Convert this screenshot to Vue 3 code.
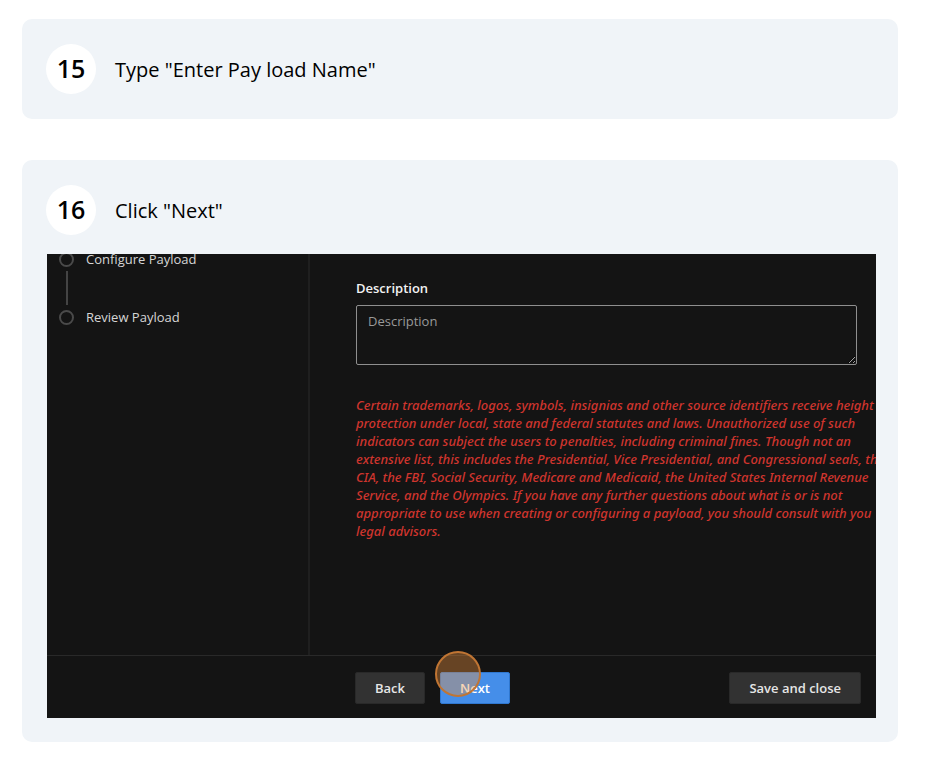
<script setup>
const wizardSteps = ['Configure Payload', 'Review Payload']
const legalLines = [
  'Certain trademarks, logos, symbols, insignias and other source identifiers receive height',
  'protection under local, state and federal statutes and laws. Unauthorized use of such',
  'indicators can subject the users to penalties, including criminal fines. Though not an',
  'extensive list, this includes the Presidential, Vice Presidential, and Congressional seals, th',
  'CIA, the FBI, Social Security, Medicare and Medicaid, the United States Internal Revenue',
  'Service, and the Olympics. If you have any further questions about what is or is not',
  'appropriate to use when creating or configuring a payload, you should consult with you',
  'legal advisors.',
]
</script>

<template>
  <main class="guide">
    <section class="card">
      <header class="card-head">
        <span class="number">15</span>
        <h2 class="title">Type "Enter Pay load Name"</h2>
      </header>
    </section>

    <section class="card">
      <header class="card-head">
        <span class="number">16</span>
        <h2 class="title">Click "Next"</h2>
      </header>

      <div class="shot">
        <div class="shot-body">
          <ol class="steps">
            <li v-for="step in wizardSteps" :key="step" class="step">
              <span class="marker"></span>
              <span class="step-label">{{ step }}</span>
            </li>
          </ol>
          <form class="form" @submit.prevent>
            <label class="label" for="description">Description</label>
            <textarea id="description" class="description" placeholder="Description"></textarea>
            <p class="legal">
              <span v-for="line in legalLines" :key="line" class="legal-line">{{ line }}</span>
            </p>
          </form>
        </div>
        <footer class="actions">
          <button type="button" class="button">Back</button>
          <span class="target">
            <button type="button" class="button primary">Next</button>
            <span class="click"></span>
          </span>
          <button type="button" class="button save">Save and close</button>
        </footer>
      </div>
    </section>
  </main>
</template>

<style>
body {
  background: #fff;
}
</style>

<style scoped>
.guide {
  display: flex;
  flex-direction: column;
  gap: 41px;
  padding: 19px 32px 38px 22px;
  font-family: "Open Sans", "Noto Sans", sans-serif;
  color: #000;
}
.card {
  padding: 25px 22px 25px 24px;
  border-radius: 10px;
  background: #f0f4f8;
}
.card:last-child {
  padding-bottom: 24px;
}
.card-head {
  display: flex;
  align-items: center;
  gap: 19px;
}
.number {
  width: 50px;
  height: 50px;
  border-radius: 50%;
  background: #fff;
  font-size: 25px;
  font-weight: 600;
  line-height: 48px;
  text-align: center;
}
.title {
  margin: 0;
  padding-top: 2px;
  font-size: 20px;
  font-weight: 400;
  line-height: 28px;
}
.shot {
  margin: 19px 0 0 1px;
  overflow: hidden;
  background: #141414;
  color: #d6d6d6;
  font-size: 13px;
  line-height: 18px;
}
.shot-body {
  display: grid;
  grid-template-columns: 263px minmax(0, 1fr);
  height: 401px;
}
.steps {
  margin: 0;
  padding: 0 0 0 12px;
  overflow: hidden;
  border-right: 2px solid #1f1f1f;
  list-style: none;
}
.step {
  position: relative;
  display: flex;
  align-items: center;
  gap: 12px;
  height: 18px;
  margin-bottom: 40px;
}
.step:first-child {
  margin-top: -4px;
}
.step:not(:last-child)::after {
  content: "";
  position: absolute;
  top: 21px;
  left: 7px;
  width: 2px;
  height: 34px;
  background: #444;
}
.marker {
  box-sizing: border-box;
  width: 15px;
  height: 15px;
  border: 2px solid #4a4a4a;
  border-radius: 50%;
}
.form {
  display: flex;
  flex-direction: column;
  padding: 25px 19px 0 46px;
}
.label {
  color: #f2f2f2;
  font-weight: 600;
}
.description {
  box-sizing: border-box;
  height: 60px;
  margin-top: 8px;
  padding: 6px 11px;
  border: 1px solid #8f8f8f;
  border-radius: 2px;
  outline: 0;
  background: #141414;
  color: #d6d6d6;
  color-scheme: dark;
  font: inherit;
  resize: vertical;
}
.description::placeholder {
  color: #999;
  opacity: 1;
}
.legal {
  margin: 31px 0 0;
  color: #cf352e;
  font-family: "Noto Sans", sans-serif;
  font-style: italic;
  font-weight: 500;
}
.legal-line {
  display: block;
  white-space: nowrap;
}
.actions {
  display: flex;
  align-items: center;
  gap: 15px;
  padding: 16px 15px 14px 308px;
  border-top: 1px solid #292929;
}
.button {
  height: 32px;
  padding: 0 19px;
  border: 1px solid #292929;
  border-radius: 2px;
  background: #323232;
  color: #e6e6e6;
  font: inherit;
  font-weight: 600;
}
.primary {
  border-color: #2f77cf;
  background: #458ee9;
  color: #fff;
}
.save {
  margin-left: auto;
}
.target {
  position: relative;
}
.click {
  position: absolute;
  top: -21px;
  left: -5px;
  box-sizing: border-box;
  width: 46px;
  height: 46px;
  border: 2px solid #c07533;
  border-radius: 50%;
  background: rgba(240, 148, 62, 0.38);
  pointer-events: none;
}
</style>
